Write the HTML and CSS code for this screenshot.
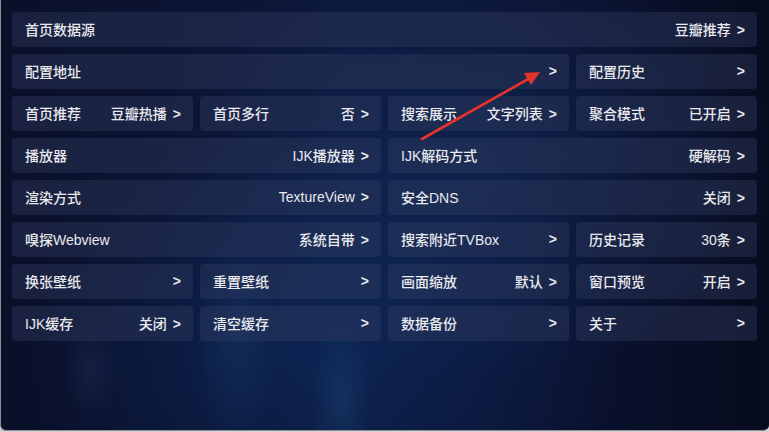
FILE: index.html
```html
<!doctype html>
<html>
<head>
<meta charset="utf-8">
<title>设置</title>
<link rel="stylesheet" href="styles.css">
</head>
<body>

<div class="frame">

    <div class="settings">
        <div class="item w4"><span>首页数据源</span><span>豆瓣推荐<b>&gt;</b></span></div>

        <div class="item w3"><span>配置地址</span><span><b>&gt;</b></span></div>
        <div class="item"><span>配置历史</span><span><b>&gt;</b></span></div>

        <div class="item"><span>首页推荐</span><span>豆瓣热播<b>&gt;</b></span></div>
        <div class="item"><span>首页多行</span><span>否<b>&gt;</b></span></div>
        <div class="item"><span>搜索展示</span><span>文字列表<b>&gt;</b></span></div>
        <div class="item"><span>聚合模式</span><span>已开启<b>&gt;</b></span></div>

        <div class="item w2"><span>播放器</span><span>IJK播放器<b>&gt;</b></span></div>
        <div class="item w2"><span>IJK解码方式</span><span>硬解码<b>&gt;</b></span></div>

        <div class="item w2"><span>渲染方式</span><span>TextureView<b>&gt;</b></span></div>
        <div class="item w2"><span>安全DNS</span><span>关闭<b>&gt;</b></span></div>

        <div class="item w2"><span>嗅探Webview</span><span>系统自带<b>&gt;</b></span></div>
        <div class="item"><span>搜索附近TVBox</span><span><b>&gt;</b></span></div>
        <div class="item"><span>历史记录</span><span>30条<b>&gt;</b></span></div>

        <div class="item"><span>换张壁纸</span><span><b>&gt;</b></span></div>
        <div class="item"><span>重置壁纸</span><span><b>&gt;</b></span></div>
        <div class="item"><span>画面缩放</span><span>默认<b>&gt;</b></span></div>
        <div class="item"><span>窗口预览</span><span>开启<b>&gt;</b></span></div>

        <div class="item"><span>IJK缓存</span><span>关闭<b>&gt;</b></span></div>
        <div class="item"><span>清空缓存</span><span><b>&gt;</b></span></div>
        <div class="item"><span>数据备份</span><span><b>&gt;</b></span></div>
        <div class="item"><span>关于</span><span><b>&gt;</b></span></div>
    </div>

    <!-- annotation arrow -->
    <svg class="arrow" width="769" height="432" viewBox="0 0 769 432">
        <line x1="422" y1="139" x2="530" y2="78" stroke="#e5322b" stroke-width="2.6" stroke-linecap="round"/>
        <polygon points="540,72 524,73 531,85" fill="#e5322b"/>
    </svg>

</div>

</body>
</html>
```

FILE: styles.css
```css
html, body { margin: 0; padding: 0; }
body { background-color: #d4d4d6; width: 769px; height: 432px; overflow: hidden; }
* { font-family: "Liberation Sans", "Noto Sans CJK SC", sans-serif; box-sizing: border-box; }

.frame {
  position: relative;
  width: 769px; height: 431px;
  border-left: 1px solid #8c8c92; border-bottom: 1px solid #8c8c92;
  border-radius: 0 0 6px 6px;
  overflow: hidden;
  background-color: #090f26;
  background-image:
    radial-gradient(ellipse 45px 110px at 340px 400px, rgba(40,105,150,0.22), transparent 70%),
    radial-gradient(ellipse 60px 150px at 235px 340px, rgba(30,85,140,0.22), transparent 70%),
    radial-gradient(ellipse 40px 70px at 90px 370px, rgba(60,70,120,0.2), transparent 70%),
    radial-gradient(ellipse 300px 220px at 330px 340px, rgba(14,50,110,0.5), transparent),
    radial-gradient(ellipse 320px 220px at 470px 160px, rgba(20,55,110,0.4), transparent),
    linear-gradient(90deg, #0a1029 0%, #0c173a 45%, #0b1332 70%, #070b1e 100%);
}

.settings {
  display: grid;
  grid-template-columns: repeat(4, 181px);
  grid-auto-rows: 35px;
  gap: 7px;
  padding: 12px 0 0 11px;
}

.item {
  display: flex; align-items: center; justify-content: space-between;
  padding: 0 12px 1px 13px;
  border-radius: 4px;
  background-color: rgba(52, 62, 100, 0.38);
  font-size: 14px; white-space: nowrap;
}
.item span { color: #e9e9ee; font-weight: 500; }
.item b { margin-left: 6px; color: #e9e9ee; font-weight: 700; }
.w2 { grid-column: span 2; }
.w3 { grid-column: span 3; }
.w4 { grid-column: span 4; }

.arrow { position: absolute; left: -1px; top: 0; pointer-events: none; }
```
